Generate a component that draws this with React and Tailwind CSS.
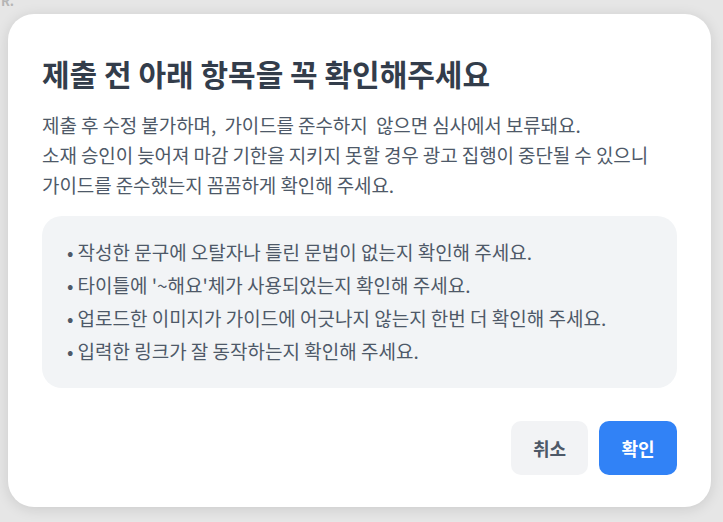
import React from 'react';

const checklist = [
  '작성한 문구에 오탈자나 틀린 문법이 없는지 확인해 주세요.',
  "타이틀에 '~해요'체가 사용되었는지 확인해 주세요.",
  '업로드한 이미지가 가이드에 어긋나지 않는지 한번 더 확인해 주세요.',
  '입력한 링크가 잘 동작하는지 확인해 주세요.',
];

export default function App() {
  return (
    <div
      className="relative h-[522px] w-[723px] overflow-hidden bg-[#e6e6e6] pl-[8px] pr-[12px] pt-[14px]"
      style={{ fontFamily: '"Noto Sans CJK KR", "Noto Sans", sans-serif' }}
    >
      <span className="absolute left-[1px] top-[-9px] text-[13px] font-bold text-[#b5b5b5]">R.</span>

      <div className="flex h-[493px] flex-col rounded-[26px] bg-white px-[34px] pb-[32px] pt-[34px] shadow-[0_2px_14px_rgba(0,0,0,0.12)]">
        <h1 className="text-[30px] font-bold leading-[50px] text-[#333d4b]">
          제출 전 아래 항목을 꼭 확인해주세요
        </h1>

        <p className="mt-[12px] text-[19px] leading-[30px] tracking-[-0.1px] text-[#4e5968]">
          제출 후 수정 불가하며,&nbsp; 가이드를 준수하지&nbsp; 않으면 심사에서 보류돼요.
          <br />
          소재 승인이 늦어져 마감 기한을 지키지 못할 경우 광고 집행이 중단될 수 있으니
          <br />
          가이드를 준수했는지 꼼꼼하게 확인해 주세요.
        </p>

        <ul className="mt-[16px] flex h-[172px] flex-col justify-center rounded-[20px] bg-[#f2f4f6] pb-[2px] pl-[25px] pr-[20px]">
          {checklist.map((item) => (
            <li
              key={item}
              className="flex gap-[4px] text-[19px] leading-[33px] text-[#4e5968]"
            >
              <span>•</span>
              <span>{item}</span>
            </li>
          ))}
        </ul>

        <div className="mt-auto flex justify-end gap-[11px]">
          <button className="h-[54px] w-[77px] rounded-[10px] bg-[#f2f3f5] text-[18px] font-bold text-[#4e5968]">
            취소
          </button>
          <button className="h-[54px] w-[78px] rounded-[10px] bg-[#3182f6] text-[18px] font-bold text-white">
            확인
          </button>
        </div>
      </div>
    </div>
  );
}
